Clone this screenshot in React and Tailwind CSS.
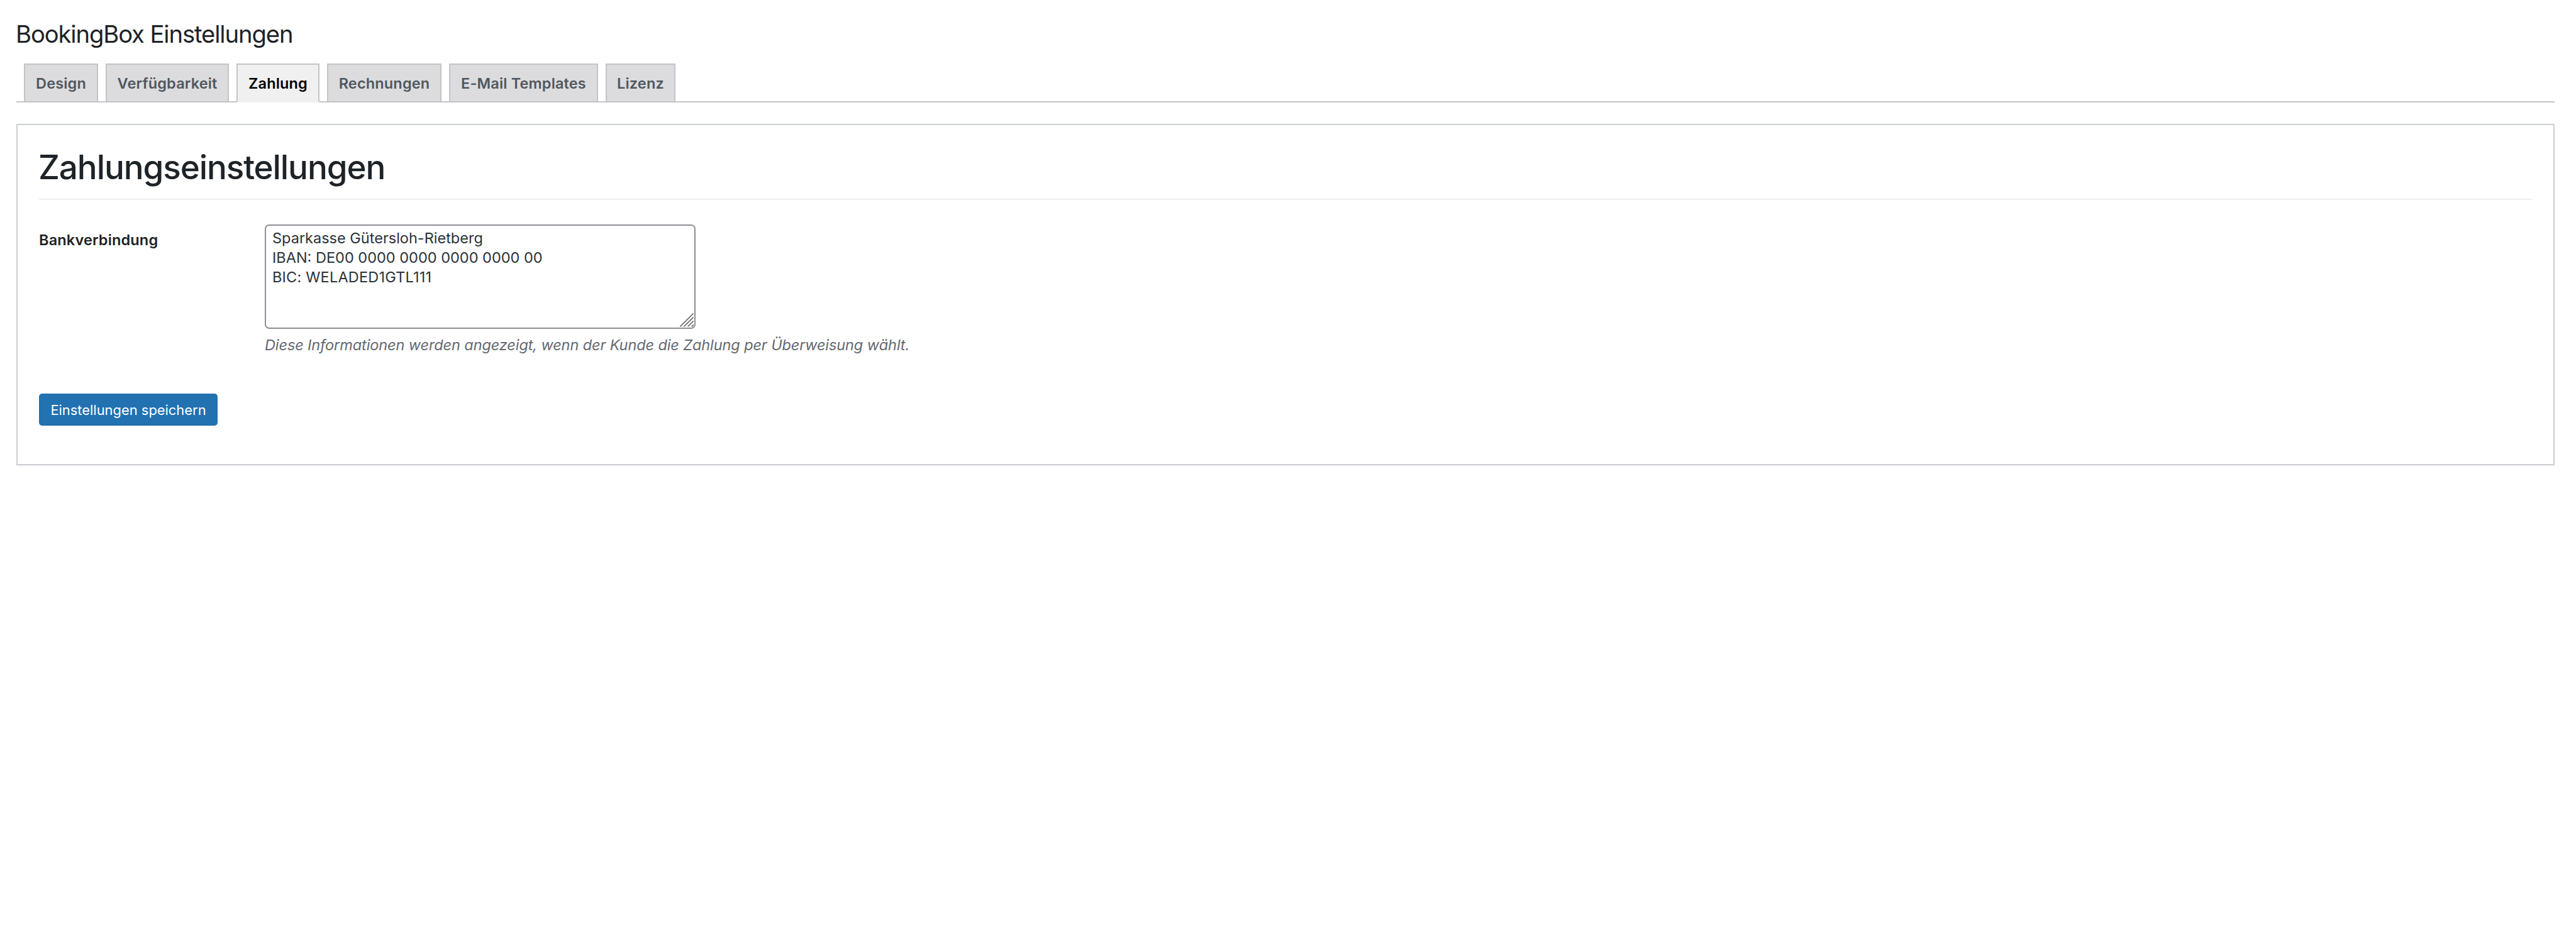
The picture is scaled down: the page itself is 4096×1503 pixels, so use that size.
import React, { useState } from 'react'
import clsx from 'clsx'

const tabs = [
  { id: 'design', label: 'Design', width: 'w-[118px]' },
  { id: 'availability', label: 'Verfügbarkeit', width: 'w-[196px]' },
  { id: 'payment', label: 'Zahlung', width: 'w-[132px]' },
  { id: 'invoices', label: 'Rechnungen', width: 'w-[182px]' },
  { id: 'templates', label: 'E-Mail Templates', width: 'w-[237px]' },
  { id: 'license', label: 'Lizenz', width: 'w-[111px]' },
]

const bankLines = [
  { text: 'Sparkasse Gütersloh-Rietberg', tracking: 'tracking-normal' },
  { text: 'IBAN: DE00 0000 0000 0000 0000 00', tracking: 'tracking-normal' },
  { text: 'BIC: WELADED1GTL111', tracking: 'tracking-[0.2px]' },
]

const ResizeGrip = () => (
  <svg
    className="absolute right-px bottom-px"
    width="22"
    height="22"
    viewBox="0 0 22 22"
    fill="none"
    stroke="#6e6e6e"
    strokeWidth="1.7"
    strokeLinecap="round"
  >
    <path d="M0.9 20.8 21.2 0.9M7.1 20.8 21.2 6.9M13.2 20.8 21.2 12.9M19.2 20.8 21.2 18.9" />
  </svg>
)

const App = () => {
  const [activeTab, setActiveTab] = useState('payment')

  return (
    <div className="min-h-[1503px] bg-white pl-[26px] pr-[34px] pt-[30px] font-['Inter',sans-serif] text-[#1d2327]">
      <h1 className="-ml-px text-[38.2px] leading-[48px] font-normal tracking-[-1.1px]">
        BookingBox Einstellungen
      </h1>

      {/* Tabs */}
      <nav className="mt-[23px] flex h-[62px] items-start gap-3 border-b-2 border-[#c3c4c7] pl-3">
        {tabs.map((tab) => (
          <button
            key={tab.id}
            onClick={() => setActiveTab(tab.id)}
            className={clsx(
              'flex shrink-0 items-center justify-center border-2 border-[#c3c4c7] pt-px text-[23.5px] leading-8 font-semibold tracking-[0.15px] whitespace-nowrap',
              tab.width,
              activeTab === tab.id
                ? 'h-[62px] border-b-[#f0f0f1] bg-[#f0f0f1] text-black'
                : 'h-[60px] border-b-0 bg-[#dcdcde] text-[#50575e]'
            )}
          >
            {tab.label}
          </button>
        ))}
      </nav>

      {/* Payment settings */}
      <section className="mt-[34px] h-[543px] border-2 border-[#ccd0d4] bg-white px-[34px] pt-[35px] shadow-[0_2px_2px_rgba(0,0,0,0.04)]">
        <h2 className="border-b-2 border-[#eeeeee] pb-[18px] -indent-px text-[53px] leading-[64px] font-medium tracking-[-1.1px]">
          Zahlungseinstellungen
        </h2>

        <div className="mt-[39px] flex items-start">
          <div className="mt-[9px] w-[359px] shrink-0 text-[23.5px] leading-8 font-semibold tracking-[0.15px]">
            Bankverbindung
          </div>
          <div>
            <div className="relative h-[166px] w-[685px] rounded-[7px] border-2 border-[#8c8f94] bg-white px-[10px] pt-1 text-[23.5px] leading-[31px] text-[#2c3338]">
              {bankLines.map((line) => (
                <div key={line.text} className={line.tracking}>
                  {line.text}
                </div>
              ))}
              <ResizeGrip />
            </div>
            <p className="mt-2 text-[23.5px] leading-9 tracking-[-0.1px] text-[#646970] italic">
              Diese Informationen werden angezeigt, wenn der Kunde die Zahlung per Überweisung wählt.
            </p>
          </div>
        </div>

        <button className="mt-[59px] block h-[51px] w-[284px] rounded-[5px] bg-[#2271b1] text-center text-[21.9px] leading-[52px] whitespace-nowrap text-white">
          Einstellungen speichern
        </button>
      </section>
    </div>
  )
}

export default App
